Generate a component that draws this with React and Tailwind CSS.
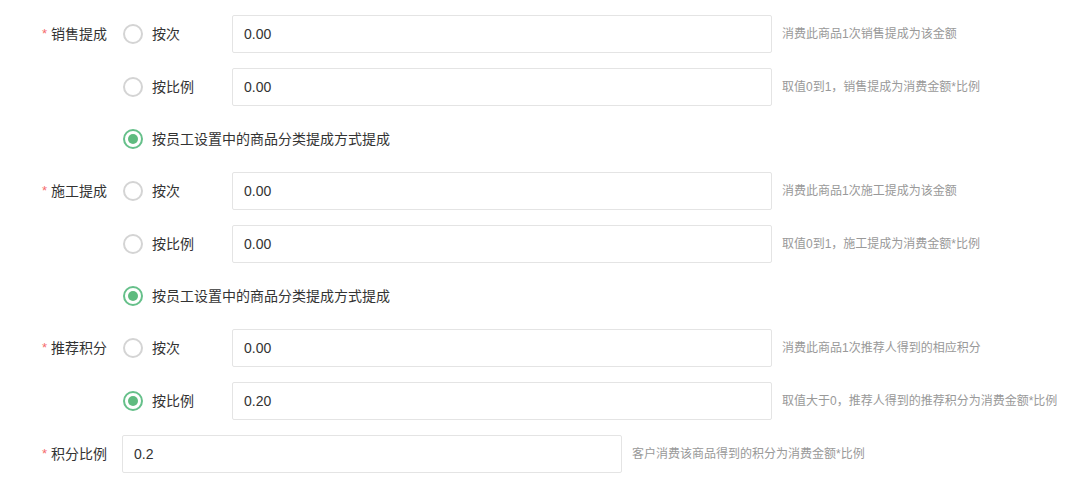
import React from "react";

const FONT = { fontFamily: '"Liberation Sans", "Noto Sans CJK SC", sans-serif' };

function Radio({ checked, label, wide }) {
  return (
    <div className={"flex items-center shrink-0 " + (wide ? "" : "w-[110px]")}>
      <span
        className={
          "ml-px w-[20px] h-[20px] rounded-full border-2 flex items-center justify-center bg-white " +
          (checked ? "border-[#66c08a]" : "border-[#d4d4d4]")
        }
      >
        {checked && <span className="w-[10px] h-[10px] rounded-full bg-[#5fbb7f]" />}
      </span>
      <span className="ml-[9px] text-[14px] text-[#333]">{label}</span>
    </div>
  );
}

function InputRow({ checked, label, value, hint }) {
  return (
    <div className="flex items-center h-[38px]">
      <Radio checked={checked} label={label} />
      <div className="w-[540px] h-[38px] border border-[#e4e4e4] rounded-[2px] flex items-center pl-[11px] text-[14px] text-[#333] shrink-0">
        {value}
      </div>
      <span className="ml-[10px] text-[12px] text-[#999] whitespace-nowrap">{hint}</span>
    </div>
  );
}

function Label({ text }) {
  return (
    <div className="w-[122px] shrink-0 h-[38px] flex items-center justify-end pr-[15px] text-[14px] text-[#333]">
      <span className="text-[#f56c6c] mr-[4px] text-[13px]">*</span>
      {text}
    </div>
  );
}

function Group({ label, rows, staff }) {
  return (
    <div className="flex">
      <Label text={label} />
      <div className="flex flex-col gap-[15px]">
        {rows.map((r, i) => (
          <InputRow key={i} {...r} />
        ))}
        {staff && (
          <div className="flex items-center h-[36px]">
            <Radio checked wide label="按员工设置中的商品分类提成方式提成" />
          </div>
        )}
      </div>
    </div>
  );
}

export default function App() {
  return (
    <div className="w-[1073px] h-[481px] bg-white pt-[15px] flex flex-col gap-[15px]" style={FONT}>
      <Group
        label="销售提成"
        staff
        rows={[
          { label: "按次", value: "0.00", hint: "消费此商品1次销售提成为该金额" },
          { label: "按比例", value: "0.00", hint: "取值0到1，销售提成为消费金额*比例" },
        ]}
      />
      <Group
        label="施工提成"
        staff
        rows={[
          { label: "按次", value: "0.00", hint: "消费此商品1次施工提成为该金额" },
          { label: "按比例", value: "0.00", hint: "取值0到1，施工提成为消费金额*比例" },
        ]}
      />
      <Group
        label="推荐积分"
        rows={[
          { label: "按次", value: "0.00", hint: "消费此商品1次推荐人得到的相应积分" },
          { label: "按比例", value: "0.20", checked: true, hint: "取值大于0，推荐人得到的推荐积分为消费金额*比例" },
        ]}
      />
      <div className="flex items-center">
        <Label text="积分比例" />
        <div className="w-[500px] h-[38px] border border-[#e4e4e4] rounded-[2px] flex items-center pl-[11px] text-[14px] text-[#333]">
          0.2
        </div>
        <span className="ml-[10px] text-[12px] text-[#999]">客户消费该商品得到的积分为消费金额*比例</span>
      </div>
    </div>
  );
}
